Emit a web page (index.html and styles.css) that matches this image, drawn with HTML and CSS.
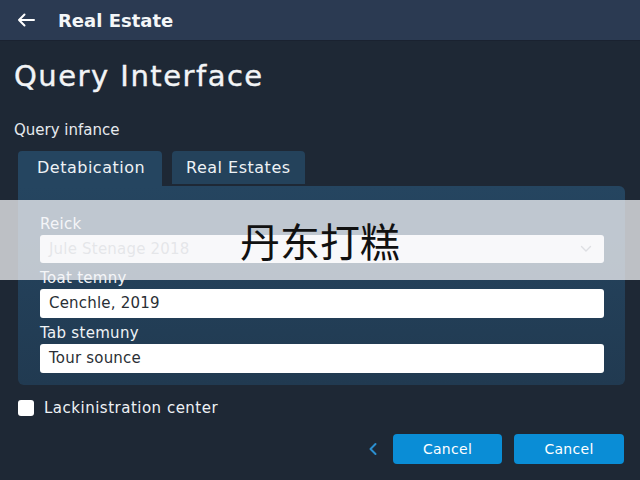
FILE: index.html
```html
<!DOCTYPE html>
<html lang="en">
<head>
<meta charset="utf-8">
<title>Real Estate</title>
<link rel="stylesheet" href="styles.css">
</head>
<body>
<header class="topbar">
  <svg class="back" width="18" height="14" viewBox="0 0 18 14"><path d="M17 7H2M7.5 1.5L2 7l5.5 5.5" fill="none" stroke="#fff" stroke-width="2" stroke-linecap="round" stroke-linejoin="round"/></svg>
  <span class="topbar-title">Real Estate</span>
</header>
<main class="page">
  <h1 class="title">Query Interface</h1>
  <p class="subtitle">Query infance</p>
  <div class="tabs">
    <div class="tab tab-active">Detabication</div>
    <div class="tab tab-second">Real Estates</div>
  </div>
  <section class="panel">
    <label class="field-label">Reick</label>
    <div class="input select"><span class="placeholder">Jule Stenage 2018</span>
      <svg width="12" height="8" viewBox="0 0 12 8"><path d="M1.5 1.5L6 6l4.5-4.5" fill="none" stroke="#9aa0a6" stroke-width="1.4" stroke-linecap="round"/></svg>
    </div>
    <label class="field-label">Toat temny</label>
    <div class="input">Cenchle, 2019</div>
    <label class="field-label">Tab stemuny</label>
    <div class="input">Tour sounce</div>
  </section>
  <div class="check-row">
    <span class="checkbox"></span>
    <span class="check-label">Lackinistration center</span>
  </div>
  <div class="actions">
    <svg class="prev" width="10" height="14" viewBox="0 0 10 14"><path d="M7.5 2L2.5 7l5 5" fill="none" stroke="#2b8fd0" stroke-width="2" stroke-linecap="round" stroke-linejoin="round"/></svg>
    <button class="btn btn-1">Cancel</button>
    <button class="btn btn-2">Cancel</button>
  </div>
</main>
<div class="band"><span class="band-text">丹东打糕</span></div>
</body>
</html>
```

FILE: styles.css
```css
* { box-sizing: border-box; }
html, body { margin: 0; padding: 0; }
body {
  width: 640px;
  height: 480px;
  overflow: hidden;
  background: #1e2835;
  font-family: "DejaVu Sans", "Open Sans", sans-serif;
  color: #fff;
  position: relative;
}
.topbar {
  height: 41px;
  background: #2b3a52;
  border-bottom: 1px solid #1a2230;
  display: flex;
  align-items: center;
  padding-left: 17px;
}
.back { display: block; }
.topbar-title {
  margin-left: 23px;
  font-size: 18px;
  font-weight: 700;
  color: #f4f6f8;
}
.page { padding: 0 15px 0 14px; }
.title {
  margin: 16px 0 0 0;
  font-size: 29px;
  font-weight: 400;
  letter-spacing: 1.5px;
  line-height: 38px;
  color: #f2f4f6;
  -webkit-text-stroke: 0.4px #f2f4f6;
}
.subtitle {
  margin: 25px 0 0 0;
  font-size: 15px;
  line-height: 20px;
  color: #e6eaee;
}
.tabs {
  display: flex;
  gap: 10px;
  margin: 11px 0 0 4px;
  align-items: flex-start;
}
.tab {
  height: 33px;
  background: #24425b;
  border-radius: 4px 4px 0 0;
  font-size: 16px;
  letter-spacing: 0.5px;
  line-height: 33px;
  color: #eef2f5;
  white-space: nowrap;
  flex-shrink: 0;
}
.tab-active {
  width: 144px;
  height: 35px;
  padding: 0 19px;
  background: #254560;
}
.tab-second {
  width: 133px;
  padding: 0 14px;
}
.panel {
  margin-left: 4px;
  width: 607px;
  height: 199px;
  background: linear-gradient(#254560, #213a51);
  border-radius: 0 6px 6px 6px;
  padding: 28px 21px 12px 22px;
}
.field-label {
  display: block;
  font-size: 15px;
  letter-spacing: 0.3px;
  line-height: 20px;
  color: #f0f3f6;
  margin-bottom: 1px;
}
.input {
  height: 29px;
  background: #fff;
  border-radius: 3px;
  padding: 0 9px;
  font-size: 15px;
  letter-spacing: 0.2px;
  line-height: 29px;
  color: #2a2f35;
  margin-bottom: 5px;
}
.select {
  display: flex;
  align-items: center;
  justify-content: space-between;
  height: 28px;
  padding-right: 12px;
}
.placeholder { color: #b4b8bd; }
.check-row {
  display: flex;
  align-items: center;
  margin: 14px 0 0 4px;
}
.checkbox {
  width: 16px;
  height: 16px;
  background: #fff;
  border-radius: 3px;
}
.check-label {
  margin-left: 10px;
  font-size: 15px;
  letter-spacing: 0.5px;
  color: #eef2f5;
}
.actions {
  display: flex;
  align-items: center;
  justify-content: flex-end;
  margin: 17px 1px 0 0;
}
.prev { margin-right: 15px; }
.btn {
  height: 30px;
  border: none;
  border-radius: 4px;
  background: #0a8dd6;
  color: #fff;
  font-family: inherit;
  font-size: 14px;
  letter-spacing: 0.3px;
  padding: 0;
}
.btn-1 { width: 109px; }
.btn-2 { width: 110px; margin-left: 12px; }
.band {
  position: absolute;
  left: 0;
  top: 200px;
  width: 640px;
  height: 80px;
  background: rgba(245, 246, 248, 0.74);
  display: flex;
  align-items: center;
  justify-content: center;
}
.band-text {
  font-family: "Noto Sans CJK SC", sans-serif;
  font-size: 40px;
  color: #111;
}
```
